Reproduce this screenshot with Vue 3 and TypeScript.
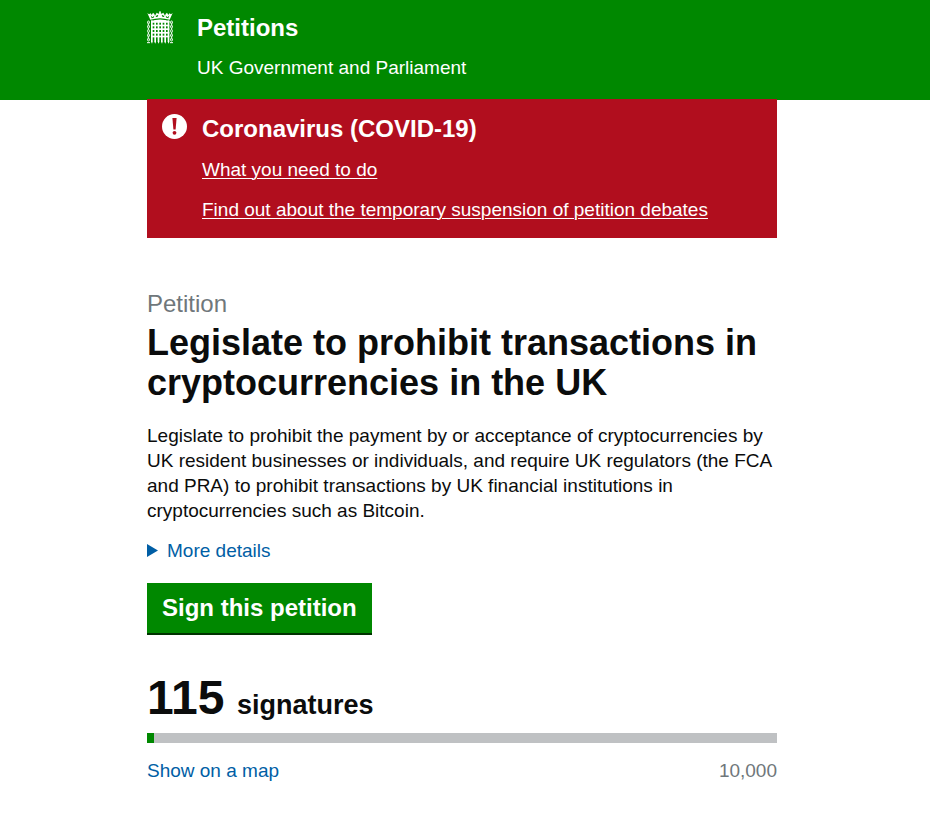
<script setup lang="ts">
import { computed } from 'vue'

interface NoticeLink {
  label: string
  href: string
}

const noticeLinks: NoticeLink[] = [
  { label: 'What you need to do', href: '#guidance' },
  { label: 'Find out about the temporary suspension of petition debates', href: '#debates' },
]

const signatures = 115
const threshold = 10000
const thresholdLabel = threshold.toLocaleString('en-GB')
const progress = computed(() => `${(signatures / threshold) * 100}%`)

const bars = [12, 22, 32, 42, 52, 62]
const rails = [30, 41, 52, 63, 74]
const links = [30, 43, 56, 69, 82]
</script>

<template>
  <div class="page">
    <header class="banner">
      <div class="shell brand">
        <svg class="crest" viewBox="0 0 78 99" aria-hidden="true">
          <g fill="#fff">
            <path d="M10 26L1 6l5 4 5-3 3 5 4-7 4 4 2 5 5-9 5 3 3-1-1-4 3-3 3 3-1 4 3 1 5-3 5 9 2-5 4-4 4 7 3-5 5 3 5-4-9 20q-29-9-58 0z" />
            <path d="M12 30q27-9 55 0v4H12z" />
            <rect v-for="x in bars" :key="`b${x}`" :x="x" y="28" width="5" height="65" />
            <rect v-for="y in rails" :key="`r${y}`" x="12" :y="y" width="55" height="5" />
            <path v-for="x in bars" :key="`p${x}`" :d="`M${x} 92h5l-2 6z`" />
          </g>
          <g fill="#008800">
            <path d="M11 13l5 6 6-5-2 6-6 2z" />
            <path d="M67 13l-5 6-6-5 2 6 6 2z" />
            <path d="M26 15l8-4-2 6-5 1z" />
            <path d="M52 15l-8-4 2 6 5 1z" />
          </g>
          <g fill="none" stroke="#fff" stroke-width="3">
            <template v-for="y in links" :key="`l${y}`">
              <rect x="2" :y="y" width="5" height="8" rx="2" />
              <rect x="71" :y="y" width="5" height="8" rx="2" />
            </template>
            <path d="M4 38v5M4 51v5M4 64v5M4 77v5M74 38v5M74 51v5M74 64v5M74 77v5M0 95h9M69 95h9" />
          </g>
        </svg>
        <div>
          <a class="site" href="#home">Petitions</a>
          <p class="owner">UK Government and Parliament</p>
        </div>
      </div>
    </header>

    <div class="shell">
      <section class="notice" aria-labelledby="notice-title">
        <svg class="alert" viewBox="0 0 25 25" aria-hidden="true">
          <circle cx="12.5" cy="12.5" r="12.5" fill="#fff" />
          <path d="M10.4 4h4.2l-1 11.5h-2.2z" fill="#b10e1e" />
          <circle cx="12.5" cy="18.8" r="1.9" fill="#b10e1e" />
        </svg>
        <div>
          <h2 id="notice-title">Coronavirus (COVID-19)</h2>
          <ul class="links">
            <li v-for="link in noticeLinks" :key="link.href">
              <a :href="link.href">{{ link.label }}</a>
            </li>
          </ul>
        </div>
      </section>

      <main>
        <h1>
          <span class="kicker">Petition</span>
          Legislate to prohibit transactions in cryptocurrencies in the UK
        </h1>
        <p class="summary">
          Legislate to prohibit the payment by or acceptance of cryptocurrencies by UK resident
          businesses or individuals, and require UK regulators (the FCA and PRA) to prohibit
          transactions by UK financial institutions in cryptocurrencies such as Bitcoin.
        </p>
        <button class="details" type="button" aria-expanded="false">
          <svg viewBox="0 0 11 13" aria-hidden="true"><path d="M0 0l11 6.5L0 13z" fill="#005ea5" /></svg>
          More details
        </button>
        <button class="sign" type="button">Sign this petition</button>

        <p class="count"><span class="number">{{ signatures }}</span> signatures</p>
        <div class="track"><div class="fill" :style="{ width: progress }"></div></div>
        <div class="legend">
          <a href="#map">Show on a map</a>
          <span>{{ thresholdLabel }}</span>
        </div>
      </main>
    </div>
  </div>
</template>

<style>
body {
  margin: 0;
  background: #fff;
}
</style>

<style scoped>
.page {
  color: #0b0c0c;
  font-family: "Liberation Sans", Arial, sans-serif;
  font-size: 19px;
  line-height: 25px;
}

h1,
h2,
p {
  margin: 0;
}

.banner {
  padding-right: 6px;
  background: #008800;
  color: #fff;
}

.banner + .shell {
  padding-right: 6px;
}

.shell {
  box-sizing: content-box;
  max-width: 630px;
  margin: 0 auto;
}

.brand {
  display: flex;
  gap: 24px;
  padding: 11px 0 20px;
}

.crest {
  flex: none;
  width: 26px;
  height: 33px;
}

.site {
  display: block;
  padding-top: 2px;
  color: #fff;
  font-size: 24px;
  font-weight: 700;
  line-height: 30px;
  text-decoration: none;
}

.owner {
  padding-top: 12px;
}

.notice {
  display: flex;
  gap: 15px;
  margin-top: -1px;
  padding: 15px 15px 16px;
  background: #b10e1e;
  color: #fff;
}

.alert {
  flex: none;
  width: 25px;
  height: 25px;
}

.notice h2 {
  font-size: 24px;
  line-height: 30px;
}

.links {
  display: grid;
  gap: 15px;
  margin: 13px 0 0;
  padding: 0;
  list-style: none;
}

.notice a {
  color: #fff;
  text-decoration-thickness: 1px;
  text-underline-offset: 2px;
}

main {
  padding: 51px 0 32px;
}

h1 {
  font-size: 36px;
  line-height: 40px;
}

.kicker {
  display: block;
  margin-bottom: 4px;
  color: #6f777b;
  font-size: 24px;
  font-weight: 400;
  line-height: 30px;
}

.summary {
  margin-top: 20px;
}

button {
  border: 0;
  font-family: inherit;
  cursor: pointer;
}

.details {
  display: flex;
  align-items: center;
  gap: 9px;
  margin-top: 15px;
  padding: 0;
  background: none;
  color: #005ea5;
  font-size: 19px;
  line-height: 25px;
}

.details svg {
  width: 11px;
  height: 13px;
}

.sign {
  display: block;
  margin-top: 20px;
  padding: 10px 15px;
  background: #008800;
  box-shadow: 0 2px 0 #003300;
  color: #fff;
  font-size: 24px;
  font-weight: 700;
  line-height: 30px;
}

.count {
  margin-top: 40px;
  font-size: 27px;
  font-weight: 700;
  line-height: 50px;
}

.number {
  margin-right: 5px;
  font-size: 48px;
}

.track {
  height: 10px;
  margin-top: 3px;
  background: #bfc1c3;
}

.fill {
  height: 100%;
  background: #008800;
}

.legend {
  display: flex;
  justify-content: space-between;
  margin-top: 15px;
  color: #6f777b;
}

.legend a {
  color: #005ea5;
  text-decoration: none;
}
</style>
